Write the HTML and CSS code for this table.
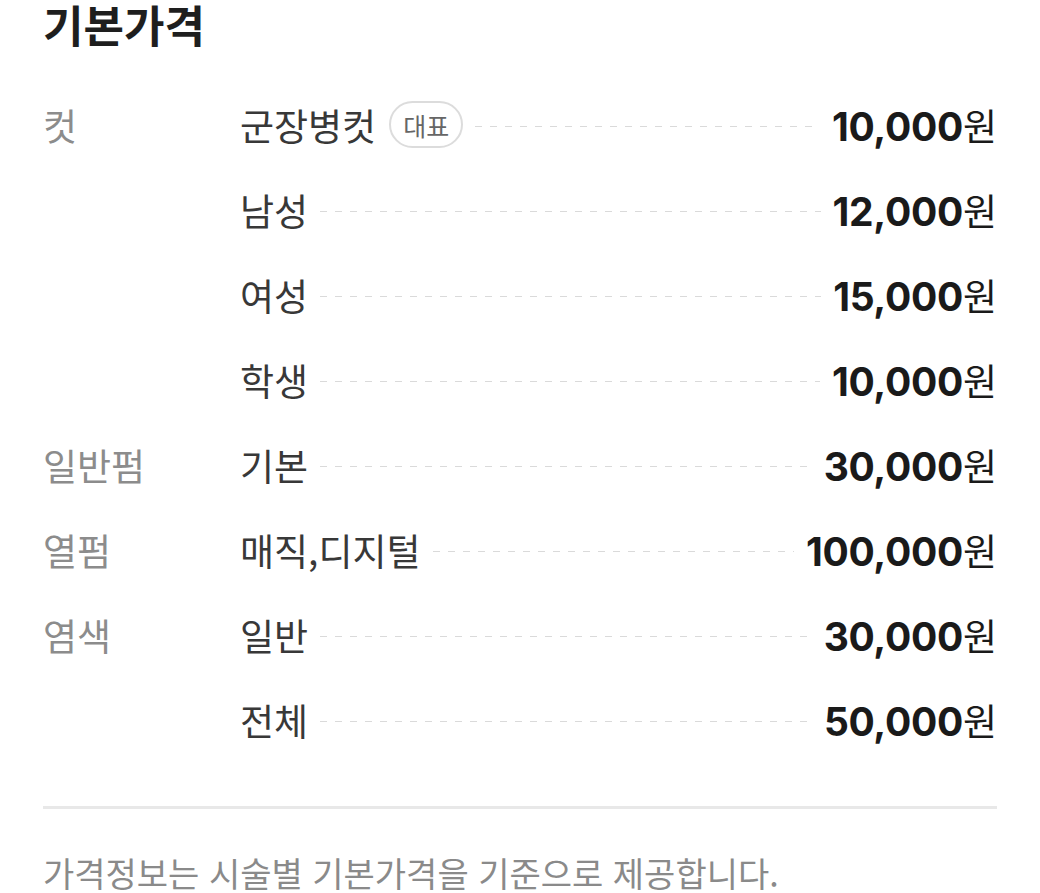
FILE: index.html
```html
<!DOCTYPE html>
<html lang="ko">
<head>
<meta charset="utf-8">
<link rel="stylesheet" href="styles.css">
</head>
<body>
<section class="price">
  <h2 class="price__title">기본가격</h2>
  <div class="price__list">
    <div class="row"><span class="row__cat">컷</span><span class="row__name">군장병컷<span class="badge">대표</span></span><span class="row__dash"></span><span class="row__price"><b>10,000</b>원</span></div>
    <div class="row"><span class="row__cat"></span><span class="row__name">남성</span><span class="row__dash"></span><span class="row__price"><b>12,000</b>원</span></div>
    <div class="row"><span class="row__cat"></span><span class="row__name">여성</span><span class="row__dash"></span><span class="row__price"><b>15,000</b>원</span></div>
    <div class="row"><span class="row__cat"></span><span class="row__name">학생</span><span class="row__dash"></span><span class="row__price"><b>10,000</b>원</span></div>
    <div class="row"><span class="row__cat">일반펌</span><span class="row__name">기본</span><span class="row__dash"></span><span class="row__price"><b>30,000</b>원</span></div>
    <div class="row"><span class="row__cat">열펌</span><span class="row__name">매직,디지털</span><span class="row__dash"></span><span class="row__price"><b>100,000</b>원</span></div>
    <div class="row"><span class="row__cat">염색</span><span class="row__name">일반</span><span class="row__dash"></span><span class="row__price"><b>30,000</b>원</span></div>
    <div class="row"><span class="row__cat"></span><span class="row__name">전체</span><span class="row__dash"></span><span class="row__price"><b>50,000</b>원</span></div>
  </div>
  <hr class="price__divider">
  <p class="price__note">가격정보는 시술별 기본가격을 기준으로 제공합니다.</p>
</section>
</body>
</html>
```
FILE: styles.css
```css
* { box-sizing: border-box; }
html, body { margin: 0; padding: 0; background: #fff; }
body {
  font-family: "Noto Sans CJK KR", "Noto Sans", sans-serif;
  color: #222;
}
.price { padding: 0 43px; }
.price__title {
  margin: 0;
  font-size: 44px;
  line-height: 48px;
  font-weight: 700;
  color: #1e1e1e;
}
.price__list { margin-top: 34px; }
.row {
  display: flex;
  align-items: center;
  height: 85px;
}
.row__cat {
  flex: 0 0 197px;
  font-size: 37px;
  color: #8c8c8c;
}
.row__name {
  display: flex;
  align-items: center;
  font-size: 37px;
  color: #383838;
}
.badge {
  display: inline-flex;
  align-items: center;
  justify-content: center;
  margin-left: 13px;
  height: 47px;
  padding: 0 12px;
  border: 2px solid #dcdcdc;
  border-radius: 24px;
  font-size: 25px;
  color: #666;
}
.row__dash {
  flex: 1;
  height: 1px;
  margin: 4px 12px 0;
  background: repeating-linear-gradient(90deg, #dadada 0 7px, transparent 7px 15px);
}
.row__price {
  font-size: 37px;
  color: #1a1a1a;
}
.row__price b {
  font-family: Inter, "Noto Sans", sans-serif;
  font-weight: 700;
  font-size: 39px;
  letter-spacing: -0.3px;
}
.price__divider {
  margin: 44px 0 0;
  border: 0;
  height: 3px;
  background: #e8e8e8;
}
.price__note {
  margin: 41px 0 0;
  font-size: 34px;
  line-height: 46px;
  color: #8a8a8a;
}
```
